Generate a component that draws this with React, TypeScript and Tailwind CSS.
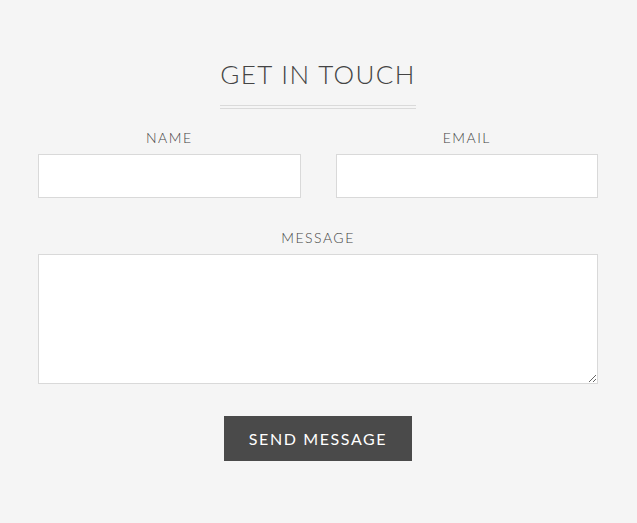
export default function App() {
  return (
    <div
      className="min-h-[523px] w-full bg-[#f5f5f5] pt-[58px]"
      style={{ fontFamily: "Lato, 'Open Sans', sans-serif" }}
    >
      <div className="ml-[38px] w-[560px]">
        <div className="flex flex-col items-center">
          <h1 className="text-[26px] font-light leading-8 tracking-[1.4px] text-[#444]">
            GET IN TOUCH
          </h1>
          <div className="mt-[15px] w-[196px] border-y border-[#dadada] h-[4px]" />
        </div>

        <form className="mt-[19px]" onSubmit={(e) => e.preventDefault()}>
          <div className="grid grid-cols-2 gap-x-[35px]">
            <label className="flex flex-col items-center">
              <span className="text-[14px] font-light leading-5 tracking-[1.5px] text-[#444]">
                NAME
              </span>
              <input className="mt-[6px] h-[44px] w-full border border-[#d9d9d9] bg-white outline-none" />
            </label>
            <label className="flex flex-col items-center">
              <span className="text-[14px] font-light leading-5 tracking-[1.5px] text-[#444]">
                EMAIL
              </span>
              <input className="mt-[6px] h-[44px] w-full border border-[#d9d9d9] bg-white outline-none" />
            </label>
          </div>

          <label className="mt-[30px] flex flex-col items-center">
            <span className="text-[14px] font-light leading-5 tracking-[1.5px] text-[#444]">
              MESSAGE
            </span>
            <textarea className="mt-[6px] block h-[130px] w-full border border-[#d9d9d9] bg-white outline-none" />
          </label>

          <div className="mt-[32px] flex justify-center">
            <button
              type="submit"
              className="h-[45px] w-[188px] bg-[#4a4a4a] text-[16px] font-normal tracking-[1.6px] text-white"
            >
              SEND MESSAGE
            </button>
          </div>
        </form>
      </div>
    </div>
  );
}
